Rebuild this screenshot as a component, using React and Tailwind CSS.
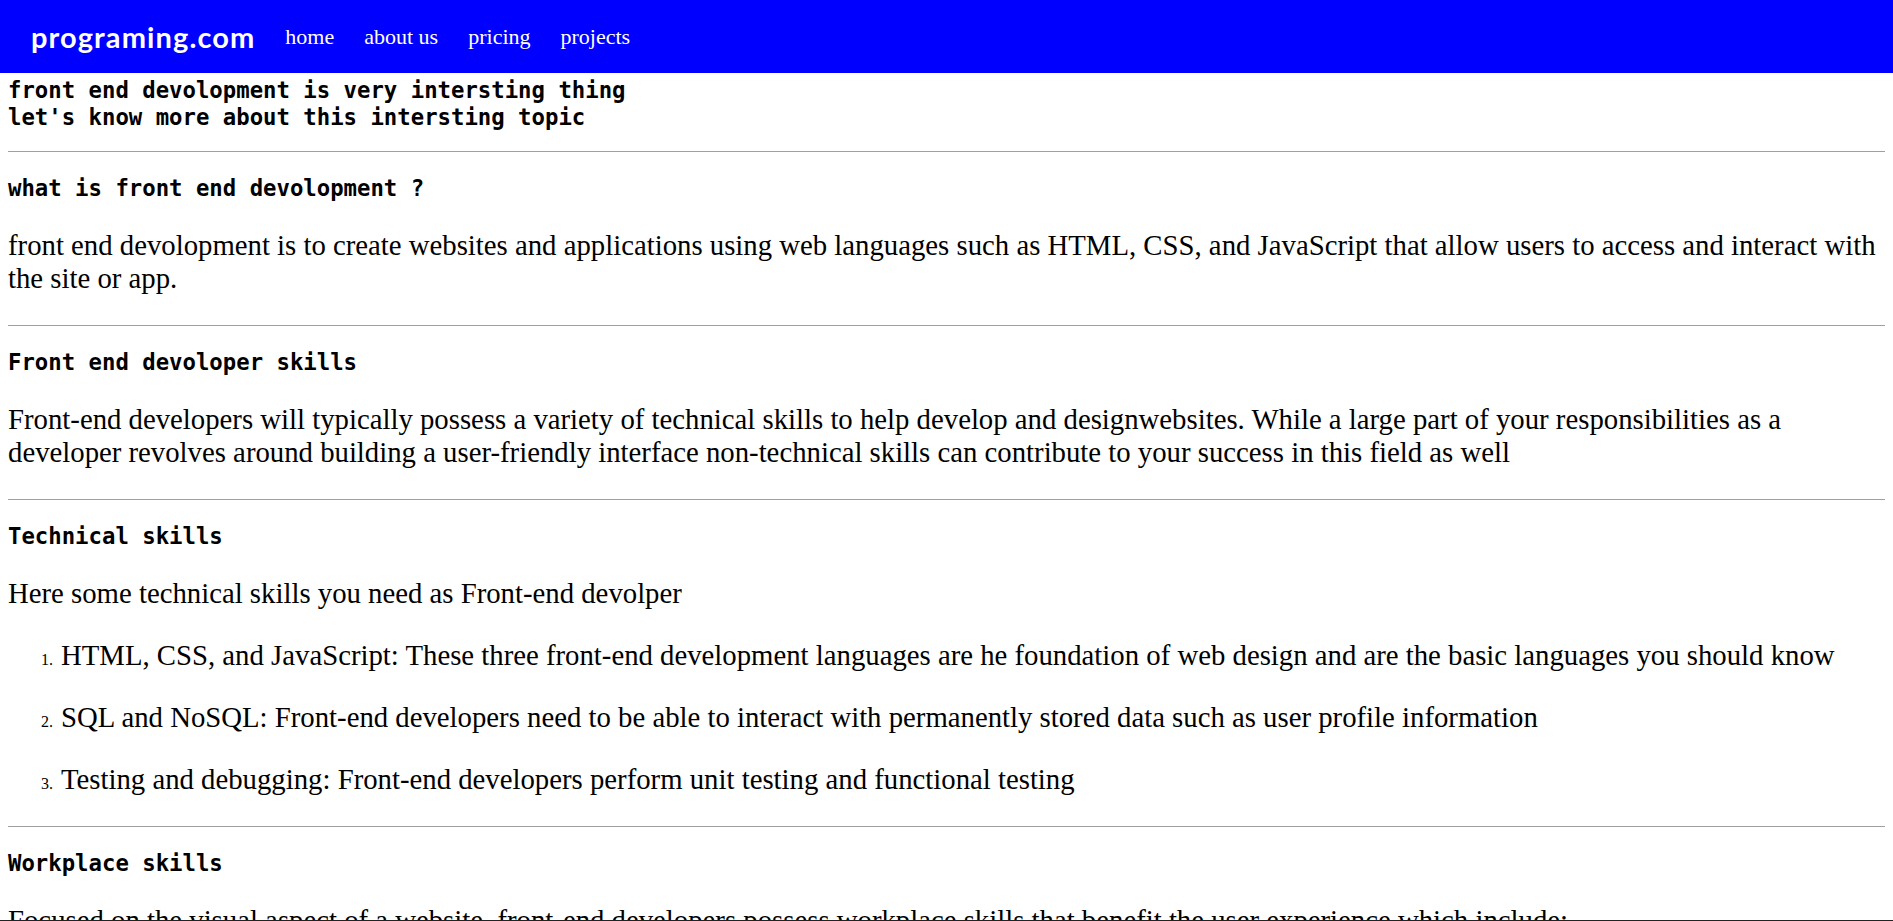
import React from 'react';

const mono = { fontFamily: '"DejaVu Sans Mono", "Liberation Mono", monospace' };
const serif = { fontFamily: '"Liberation Serif", "Times New Roman", serif' };

const links = ['home', 'about us', 'pricing', 'projects'];

const skills = [
    'HTML, CSS, and JavaScript: These three front-end development languages are he foundation of web design and are the basic languages you should know',
    'SQL and NoSQL: Front-end developers need to be able to interact with permanently stored data such as user profile information',
    'Testing and debugging: Front-end developers perform unit testing and functional testing',
];

const Heading = ({ children }) => (
    <h3 style={mono} className="text-[22.3px] leading-[27px] font-bold mt-[23px]">{children}</h3>
);

const Para = ({ children }) => (
    <p style={serif} className="text-[28.75px] leading-[33px] mt-[27px]">{children}</p>
);

const Rule = () => <hr className="mt-[30px] border-0 border-t border-[#a0a0a0]" />;

const App = () => {
    return (
        <div className="min-h-screen bg-white text-black">
            <header className="h-[73px] bg-[#0000ff] flex items-center pl-[31px] gap-[30px]">
                <span style={{ fontFamily: '"Comic Sans MS", Lato, sans-serif' }} className="text-white font-bold text-[29px] tracking-[1.1px]">
                    programing.com
                </span>
                <nav>
                    <ul className="flex gap-[30px]">
                        {links.map(link => (
                            <li key={link}>
                                <a href="#" style={serif} className="text-white text-[22px]">{link}</a>
                            </li>
                        ))}
                    </ul>
                </nav>
            </header>

            <main className="px-2">
                <h2 style={mono} className="text-[22.3px] leading-[27px] font-bold pt-[4px]">
                    front end devolopment is very intersting thing
                    <br />
                    let's know more about this intersting topic
                </h2>
                <hr className="mt-[20px] border-0 border-t border-[#a0a0a0]" />

                <Heading>what is front end devolopment ?</Heading>
                <Para>
                    front end devolopment is to create websites and applications using web languages such as HTML, CSS, and JavaScript that allow users to access and interact with the site or app.
                </Para>
                <Rule />

                <Heading>Front end devoloper skills</Heading>
                <Para>
                    Front-end developers will typically possess a variety of technical skills to help develop and designwebsites. While a large part of your responsibilities as a developer revolves around building a user-friendly interface non-technical skills can contribute to your success in this field as well
                </Para>
                <Rule />

                <Heading>Technical skills</Heading>
                <Para>Here some technical skills you need as Front-end devolper</Para>
                <ol style={serif}>
                    {skills.map((s, i) => (
                        <li key={i} className="flex items-baseline mt-[29px]">
                            <span className="w-[45px] shrink-0 text-right text-[16px]">{i + 1}.</span>
                            <span className="ml-[8px] text-[28.75px] leading-[33px]">{s}</span>
                        </li>
                    ))}
                </ol>
                <Rule />

                <Heading>Workplace skills</Heading>
                <Para>
                    Focused on the visual aspect of a website, front-end developers possess workplace skills that benefit the user experience which include:
                </Para>
            </main>

            <div className="fixed inset-x-0 bottom-0 h-px bg-[#222]" />
        </div>
    );
};

export default App;
